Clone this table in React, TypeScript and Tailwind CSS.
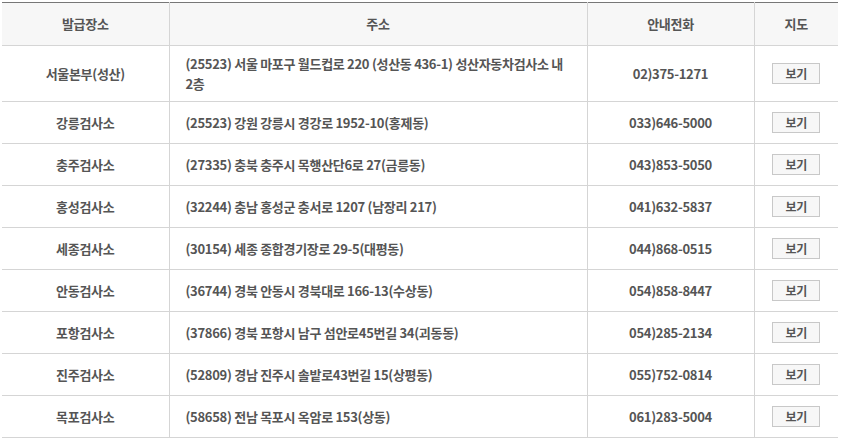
import React from 'react';

type Office = {
  name: string;
  address: string;
  phone: string;
};

const offices: Office[] = [
  { name: '서울본부(성산)', address: '(25523) 서울 마포구 월드컵로 220 (성산동 436-1) 성산자동차검사소 내 2층', phone: '02)375-1271' },
  { name: '강릉검사소', address: '(25523) 강원 강릉시 경강로 1952-10(홍제동)', phone: '033)646-5000' },
  { name: '충주검사소', address: '(27335) 충북 충주시 목행산단6로 27(금릉동)', phone: '043)853-5050' },
  { name: '홍성검사소', address: '(32244) 충남 홍성군 충서로 1207 (남장리 217)', phone: '041)632-5837' },
  { name: '세종검사소', address: '(30154) 세종 종합경기장로 29-5(대평동)', phone: '044)868-0515' },
  { name: '안동검사소', address: '(36744) 경북 안동시 경북대로 166-13(수상동)', phone: '054)858-8447' },
  { name: '포항검사소', address: '(37866) 경북 포항시 남구 섬안로45번길 34(괴동동)', phone: '054)285-2134' },
  { name: '진주검사소', address: '(52809) 경남 진주시 솔밭로43번길 15(상평동)', phone: '055)752-0814' },
  { name: '목포검사소', address: '(58658) 전남 목포시 옥암로 153(상동)', phone: '061)283-5004' },
];

export default function App() {
  return (
    <div className="w-[841px] h-[442px] bg-white pt-[2px] pl-[2px] font-['Noto_Sans_CJK_KR','Noto_Sans',sans-serif] text-[13px] text-[#555] tracking-[-0.3px]">
      <table className="w-[836px] border-collapse table-fixed border-t border-[#777]">
        <colgroup>
          <col className="w-[167px]" />
          <col className="w-[418px]" />
          <col className="w-[167px]" />
          <col className="w-[84px]" />
        </colgroup>
        <thead>
          <tr className="h-[43px] bg-[#f7f7f7] border-b border-[#d5d5d5]">
            <th className="font-bold text-[#555] border-r border-[#d5d5d5]">발급장소</th>
            <th className="font-bold text-[#555] border-r border-[#d5d5d5]">주소</th>
            <th className="font-bold text-[#555] border-r border-[#d5d5d5]">안내전화</th>
            <th className="font-bold text-[#555]">지도</th>
          </tr>
        </thead>
        <tbody>
          {offices.map((o, i) => (
            <tr key={o.name} className={`${i === 0 ? 'h-[56px]' : 'h-[42px]'} border-b border-[#d5d5d5]`}>
              <td className="text-center font-bold border-r border-[#d5d5d5]">{o.name}</td>
              <td className="pl-4 pr-2 font-bold break-keep leading-[20px] border-r border-[#d5d5d5]">{o.address}</td>
              <td className="text-center font-bold border-r border-[#d5d5d5]">{o.phone}</td>
              <td className="text-center">
                <button className="w-[48px] h-[21px] bg-[#f7f7f7] border border-[#c8c8c8] text-[12px] font-bold text-[#555] leading-none">
                  보기
                </button>
              </td>
            </tr>
          ))}
        </tbody>
      </table>
    </div>
  );
}
